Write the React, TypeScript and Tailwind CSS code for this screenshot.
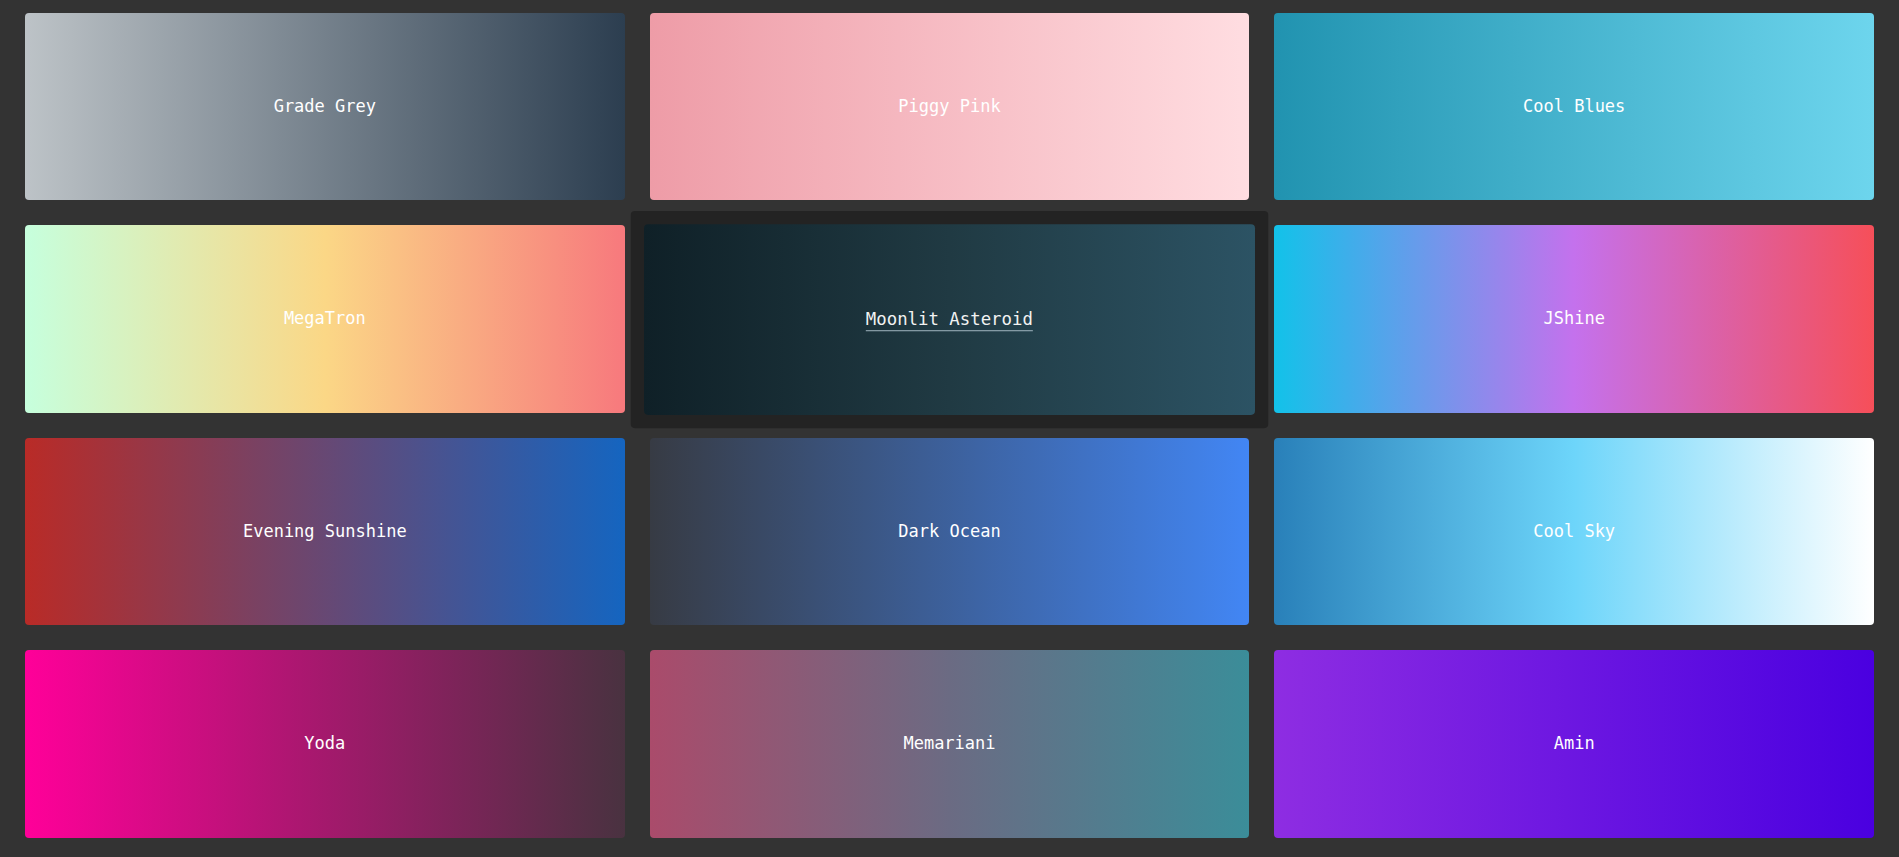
import React from 'react';

interface Gradient {
  name: string;
  bg: string;
}

const gradients: Gradient[] = [
  { name: 'Grade Grey', bg: 'bg-[linear-gradient(to_right,#bdc3c7,#2c3e50)]' },
  { name: 'Piggy Pink', bg: 'bg-[linear-gradient(to_right,#ee9ca7,#ffdde1)]' },
  { name: 'Cool Blues', bg: 'bg-[linear-gradient(to_right,#2193b0,#6dd5ed)]' },
  { name: 'MegaTron', bg: 'bg-[linear-gradient(to_right,#c6ffdd,#fbd786,#f7797d)]' },
  { name: 'Moonlit Asteroid', bg: 'bg-[linear-gradient(to_right,#0f2027,#203a43,#2c5364)]' },
  { name: 'JShine', bg: 'bg-[linear-gradient(to_right,#12c2e9,#c471ed,#f64f59)]' },
  { name: 'Evening Sunshine', bg: 'bg-[linear-gradient(to_right,#b92b27,#1565c0)]' },
  { name: 'Dark Ocean', bg: 'bg-[linear-gradient(to_right,#373b44,#4286f4)]' },
  { name: 'Cool Sky', bg: 'bg-[linear-gradient(to_right,#2980b9,#6dd5fa,#ffffff)]' },
  { name: 'Yoda', bg: 'bg-[linear-gradient(to_right,#ff0099,#493240)]' },
  { name: 'Memariani', bg: 'bg-[linear-gradient(to_right,#aa4b6b,#6b6b83,#3b8d99)]' },
  { name: 'Amin', bg: 'bg-[linear-gradient(to_right,#8e2de2,#4a00e0)]' },
];

function GradientCard({ item, active }: { item: Gradient; active: boolean }) {
  return (
    <div
      className={
        active
          ? 'p-[12.5px] rounded-[4px] bg-[#232323] scale-[1.02]'
          : 'p-[12.5px]'
      }
    >
      <a
        href="#"
        className={`flex h-[187.5px] items-center justify-center rounded-[4px] ${item.bg}`}
      >
        <span
          className={
            active
              ? 'text-[17px] text-[#f2f2f2] underline decoration-[#9fb3bd] underline-offset-[5px]'
              : 'text-[17px] text-white'
          }
          style={{ fontFamily: '"DejaVu Sans Mono", "Liberation Mono", monospace' }}
        >
          {item.name}
        </span>
      </a>
    </div>
  );
}

export default function App() {
  return (
    <div className="min-h-screen bg-[#333333]">
      <div className="grid grid-cols-3 px-[12.5px]">
        {gradients.map((g) => (
          <GradientCard key={g.name} item={g} active={g.name === 'Moonlit Asteroid'} />
        ))}
      </div>
    </div>
  );
}
